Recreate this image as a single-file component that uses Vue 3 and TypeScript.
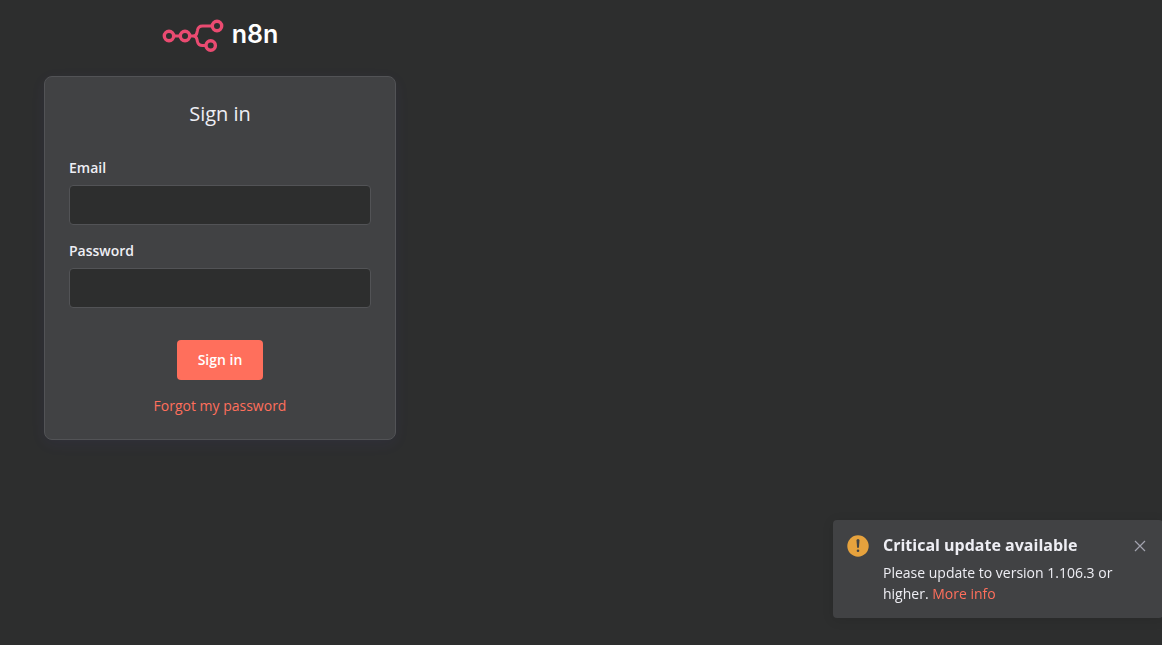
<script setup lang="ts">
import { ref } from 'vue'

interface Field {
  id: string
  label: string
  type: string
  autocomplete: string
}

const fields: Field[] = [
  { id: 'email', label: 'Email', type: 'email', autocomplete: 'email' },
  { id: 'password', label: 'Password', type: 'password', autocomplete: 'current-password' },
]

const values = ref<Record<string, string>>({ email: '', password: '' })
const toastOpen = ref(true)
</script>

<template>
  <div class="page">
    <main class="auth">
      <div class="logo">
        <svg class="logo-mark" viewBox="0 0 62 36" aria-hidden="true">
          <g fill="none" stroke="#ea4b71" stroke-width="3.400">
            <circle cx="7" cy="20" r="4.700" />
            <circle cx="23" cy="20" r="4.700" />
            <circle cx="55" cy="10" r="4.700" />
            <circle cx="48.700" cy="29.500" r="4.700" />
            <path stroke-width="3" d="M11.500 20h7M27.500 20h3.500c2.500 0 3.700-1.300 4-3.500l.4-2c.5-3 2.300-4.500 5.100-4.500h10M31 20c2.500 0 3.500 1.300 4 3.500l.4 2c.6 2.700 2.300 4 5 4h4" />
          </g>
        </svg>
        <span class="logo-name">n8n</span>
      </div>

      <form class="card" @submit.prevent>
        <h1 class="title">Sign in</h1>
        <div class="fields">
          <div v-for="field in fields" :key="field.id" class="field">
            <label class="label" :for="field.id">{{ field.label }}</label>
            <input
              :id="field.id"
              v-model="values[field.id]"
              class="input"
              :type="field.type"
              :autocomplete="field.autocomplete"
            />
          </div>
        </div>
        <button class="submit" type="submit">Sign in</button>
        <a class="link" href="#forgot">Forgot my password</a>
      </form>
    </main>

    <aside v-if="toastOpen" class="toast" role="alert">
      <svg class="toast-icon" viewBox="0 0 22 22" aria-hidden="true">
        <circle cx="11" cy="11" r="10.700" fill="#e6a23d" />
        <path d="M9.500 5.500a1.500 1.500 0 0 1 3 0l-.6 7.200h-1.800z" fill="#414244" />
        <circle cx="11" cy="15.800" r="1.300" fill="#414244" />
      </svg>
      <div class="toast-body">
        <h2 class="toast-title">Critical update available</h2>
        <p class="toast-text">
          Please update to version 1.106.3 or higher.
          <a class="link" href="#info">More info</a>
        </p>
      </div>
      <button class="close" type="button" aria-label="Close" @click="toastOpen = false">
        <svg viewBox="0 0 12 12" aria-hidden="true">
          <path d="M1 1l10 10M11 1L1 11" fill="none" stroke="#a2a3ae" stroke-width="1.200" />
        </svg>
      </button>
    </aside>
  </div>
</template>

<style>
body {
  margin: 0;
  background: #2d2e2e;
}
</style>

<style scoped>
.page {
  min-height: 100vh;
  overflow: hidden;
  box-sizing: border-box;
  background: #2d2e2e;
  color: #eeeef4;
  font-family: "Open Sans", sans-serif;
  font-size: 14px;
  line-height: 20px;
}

.auth {
  display: flex;
  flex-direction: column;
  gap: 24px;
  width: 352px;
  max-width: calc(100% - 88px);
  padding: 16px 44px;
}

.logo {
  display: flex;
  align-items: center;
  justify-content: center;
  gap: 8px;
  height: 36px;
}

.logo-mark {
  width: 62px;
  height: 36px;
  overflow: visible;
}

.logo-name {
  color: #fff;
  font-family: Inter, sans-serif;
  font-size: 25px;
  font-weight: 600;
  line-height: 36px;
}

.card {
  display: flex;
  flex-direction: column;
  align-items: center;
  padding: 24px;
  border: 1px solid #525356;
  border-radius: 8px;
  background: #414244;
  box-shadow: 0 4px 16px rgba(99, 77, 255, 0.06);
}

.title {
  margin: 0 0 32px;
  font-size: 20px;
  font-weight: 400;
  line-height: 25px;
}

.fields {
  display: flex;
  flex-direction: column;
  gap: 16px;
  width: 100%;
  margin-bottom: 32px;
}

.field {
  display: flex;
  flex-direction: column;
  gap: 8px;
}

.label {
  font-weight: 600;
  line-height: 19px;
}

.input {
  box-sizing: border-box;
  width: 100%;
  height: 40px;
  padding: 0 12px;
  border: 1px solid #525356;
  border-radius: 4px;
  background: #2d2e2e;
  color: inherit;
  font: inherit;
}

.submit {
  height: 40px;
  margin-bottom: 16px;
  padding: 0 21px;
  border: 0;
  border-radius: 4px;
  background: #ff6f5c;
  color: #fff;
  font: inherit;
  font-weight: 600;
}

.link {
  color: #ff6f5c;
  line-height: 19px;
  text-decoration: none;
}

.toast {
  position: fixed;
  right: -1px;
  bottom: 27px;
  display: flex;
  align-items: flex-start;
  box-sizing: border-box;
  width: 330px;
  padding: 14px 17px 14px 14px;
  border-radius: 4px;
  background: #414244;
  box-shadow: 0 2px 12px rgba(0, 0, 0, 0.1);
}

.toast-icon {
  flex: none;
  width: 22px;
  height: 22px;
  margin-top: 1px;
}

.toast-body {
  flex: 1;
  margin-left: 14px;
}

.toast-title {
  margin: 0 0 6px;
  font-size: 16px;
  font-weight: 700;
  line-height: 22px;
}

.toast-text {
  margin: 0;
  line-height: 21px;
}

.close {
  flex: none;
  display: flex;
  margin-top: 6px;
  padding: 0;
  border: 0;
  background: none;
}

.close svg {
  width: 12px;
  height: 12px;
}
</style>
